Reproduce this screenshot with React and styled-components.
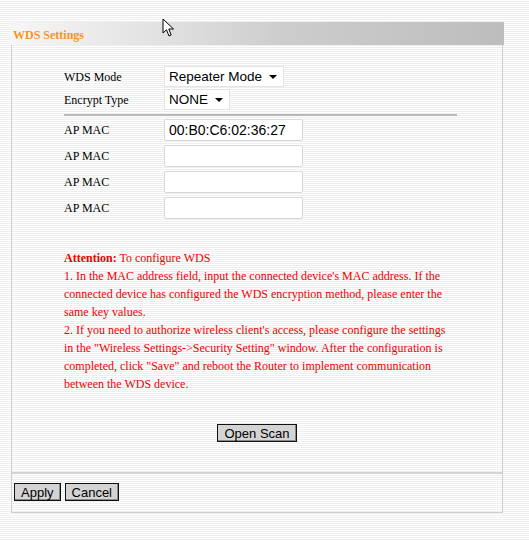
import React from 'react';
import styled, { createGlobalStyle } from 'styled-components';

const GlobalStyle = createGlobalStyle`
  html, body {
    margin: 0;
    padding: 0;
  }
  body {
    width: 529px;
    height: 540px;
    overflow: hidden;
    background: repeating-linear-gradient(to bottom, #ffffff 0, #ffffff 1px, #eeeeee 1px, #eeeeee 2px);
    font-family: 'Liberation Serif', 'Times New Roman', serif;
  }
`

const Page = styled.div`
  position: relative;
  padding: 22px 0 0 10px;
`

const Header = styled.div`
  width: 494px;
  height: 23px;
  display: flex;
  align-items: center;
  padding-left: 3px;
  box-sizing: border-box;
  background: linear-gradient(to right, #f6f6f6 0%, #e2e2e2 30%, #cdcdcd 55%, #bdbdbd 100%);
`

const Title = styled.span`
  font-size: 12px;
  font-weight: bold;
  color: #f7941d;
  padding-top: 3px;
`

const Panel = styled.div`
  width: 492px;
  margin-left: 1px;
  border: 1px solid #cfcfcf;
  border-top: none;
  box-sizing: border-box;
`

const Body = styled.div`
  padding: 21px 0 0 52px;
  height: 429px;
  box-sizing: border-box;
  border-bottom: 2px solid #d4d4d4;
`

const Grid = styled.div`
  display: grid;
  grid-template-columns: 100px auto;
  align-items: center;
  row-gap: ${p => p.gap || 0}px;
  width: 393px;
`

const Label = styled.span`
  font-size: 12px;
  color: #000;
`

const Select = styled.div`
  display: inline-flex;
  align-items: center;
  justify-content: space-between;
  box-sizing: border-box;
  width: ${p => p.w}px;
  height: 21px;
  margin-bottom: 2px;
  padding: 0 6px 0 4px;
  background: #fff;
  border: 1px solid #e4e4e4;
  font-family: 'Liberation Sans', Arial, sans-serif;
  font-size: 13.5px;
  color: #000;
  justify-self: start;
`

const Arrow = styled.span`
  width: 0;
  height: 0;
  border-left: 4px solid transparent;
  border-right: 4px solid transparent;
  border-top: 4px solid #000;
`

const Divider = styled.div`
  width: 393px;
  height: 2px;
  background: #b9b9b9;
  margin: 2px 0 3px;
`

const MacInput = styled.input`
  box-sizing: border-box;
  width: 139px;
  height: 22px;
  padding: 0 4px;
  margin: 0;
  background: #fff;
  border: 1px solid #d8d8d8;
  border-radius: 2px;
  font-family: 'Liberation Sans', Arial, sans-serif;
  font-size: 14px;
  color: #000;
  outline: none;
`

const Notice = styled.div`
  margin-top: 30px;
  width: 385px;
  font-size: 12px;
  line-height: 18px;
  color: #f00000;
  b { font-weight: bold; }
`

const ScanRow = styled.div`
  display: flex;
  justify-content: center;
  margin: 31px 0 0 -52px;
  width: 490px;
`

const Button = styled.button`
  height: 18px;
  padding: 0 6px;
  margin: 0;
  background: #d4d4d4;
  border: 1px solid #111;
  box-shadow: inset -1px -1px 0 #888;
  border-radius: 0;
  font-family: 'Liberation Sans', Arial, sans-serif;
  font-size: 13px;
  color: #000;
  line-height: 15px;
`

const Footer = styled.div`
  display: flex;
  gap: 4px;
  padding: 9px 0 11px 2px;
`

const Cursor = styled.svg`
  position: absolute;
  left: 162px;
  top: 18px;
`

export default function App() {
  return (
    <>
      <GlobalStyle />
      <Page>
        <Cursor width="14" height="20" viewBox="0 0 14 20">
          <path d="M1 1 L1 15 L4.5 11.8 L7 18 L9.2 17 L6.8 11 L11.5 11 Z" fill="#fff" stroke="#000" strokeWidth="1" strokeLinejoin="round" />
        </Cursor>
        <Header>
          <Title>WDS Settings</Title>
        </Header>
        <Panel>
          <Body>
            <Grid>
              <Label>WDS Mode</Label>
              <Select w={120}>Repeater Mode<Arrow /></Select>
              <Label>Encrypt Type</Label>
              <Select w={66}>NONE<Arrow /></Select>
            </Grid>
            <Divider />
            <Grid gap={4}>
              <Label>AP MAC</Label>
              <MacInput defaultValue="00:B0:C6:02:36:27" />
              <Label>AP MAC</Label>
              <MacInput />
              <Label>AP MAC</Label>
              <MacInput />
              <Label>AP MAC</Label>
              <MacInput />
            </Grid>
            <Notice>
              <b>Attention:</b> To configure WDS<br />
              1. In the MAC address field, input the connected device's MAC address. If the connected device has configured the WDS encryption method, please enter the same key values.<br />
              2. If you need to authorize wireless client's access, please configure the settings in the "Wireless Settings-&gt;Security Setting" window. After the configuration is completed, click "Save" and reboot the Router to implement communication between the WDS device.
            </Notice>
            <ScanRow>
              <Button>Open Scan</Button>
            </ScanRow>
          </Body>
          <Footer>
            <Button>Apply</Button>
            <Button>Cancel</Button>
          </Footer>
        </Panel>
      </Page>
    </>
  );
}
